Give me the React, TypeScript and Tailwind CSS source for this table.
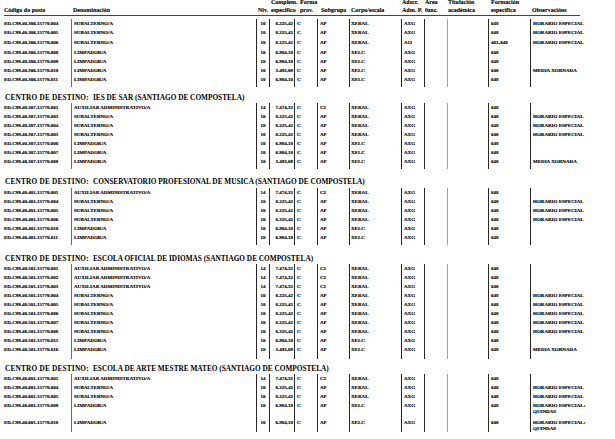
import React from "react";

type R = {
  code: string;
  den: string;
  niv: string;
  comp: string;
  sub: string;
  corpo: string;
  adscr: string;
  form: string;
  obs: string[];
  h?: string;
};

const AUX = { den: "AUXILIAR ADMINISTRATIVO/A", niv: "14", comp: "7.474,32", sub: "C2", corpo: "XERAL", adscr: "AXG", form: "648", obs: [] as string[] };
const SUB = { den: "SUBALTERNO/A", niv: "10", comp: "8.225,42", sub: "AP", corpo: "XERAL", adscr: "AXG", form: "648", obs: ["HORARIO ESPECIAL"] };
const LIM = { den: "LIMPADOR/A", niv: "10", comp: "6.984,18", sub: "AP", corpo: "XELC", adscr: "AXG", form: "648", obs: [] as string[] };
const LIMM = { den: "LIMPADOR/A", niv: "10", comp: "3.492,09", sub: "AP", corpo: "XELC", adscr: "AXG", form: "648", obs: ["MEDIA XORNADA"] };

const H9 = "h-[9px] leading-[9px]";

const sec1: R[] = [
  { code: "ED.C99.40.306.15770.004", ...SUB },
  { code: "ED.C99.40.306.15770.005", ...SUB },
  { code: "ED.C99.40.306.15770.006", ...SUB, adscr: "A11", form: "461-648", h: "h-[11px] leading-[11px]" },
  { code: "ED.C99.40.306.15770.008", ...LIM },
  { code: "ED.C99.40.306.15770.009", ...LIM },
  { code: "ED.C99.40.306.15770.010", ...LIMM },
  { code: "ED.C99.40.306.15770.011", ...LIM },
];

const sec2: R[] = [
  { code: "ED.C99.40.307.15770.001", ...AUX },
  { code: "ED.C99.40.307.15770.003", ...SUB },
  { code: "ED.C99.40.307.15770.004", ...SUB },
  { code: "ED.C99.40.307.15770.005", ...SUB },
  { code: "ED.C99.40.307.15770.006", ...LIM },
  { code: "ED.C99.40.307.15770.007", ...LIM },
  { code: "ED.C99.40.307.15770.008", ...LIMM },
];

const sec3: R[] = [
  { code: "ED.C99.40.401.15770.001", ...AUX },
  { code: "ED.C99.40.401.15770.004", ...SUB },
  { code: "ED.C99.40.401.15770.005", ...SUB },
  { code: "ED.C99.40.401.15770.006", ...SUB },
  { code: "ED.C99.40.401.15770.010", ...LIM },
  { code: "ED.C99.40.401.15770.011", ...LIM },
];

const sec4: R[] = [
  { code: "ED.C99.40.501.15770.001", ...AUX },
  { code: "ED.C99.40.501.15770.002", ...AUX },
  { code: "ED.C99.40.501.15770.003", ...AUX },
  { code: "ED.C99.40.501.15770.004", ...SUB },
  { code: "ED.C99.40.501.15770.005", ...SUB },
  { code: "ED.C99.40.501.15770.006", ...SUB },
  { code: "ED.C99.40.501.15770.007", ...SUB },
  { code: "ED.C99.40.501.15770.008", ...SUB },
  { code: "ED.C99.40.501.15770.015", ...LIM },
  { code: "ED.C99.40.501.15770.016", ...LIMM },
];

const sec5: R[] = [
  { code: "ED.C99.40.601.15770.001", ...AUX },
  { code: "ED.C99.40.601.15770.004", ...SUB },
  { code: "ED.C99.40.601.15770.005", ...SUB },
  { code: "ED.C99.40.601.15770.009", ...LIM, obs: ["HORARIO ESPECIAL:", "QUINDAS"], h: "h-[17px] leading-[9px]" },
  { code: "ED.C99.40.601.15770.010", ...LIM, obs: ["HORARIO ESPECIAL:", "QUINDAS"], h: "h-[14px] leading-[9px]" },
];

const B = "shrink-0 border-l border-[#262626]";

function Row({ r }: { r: R }) {
  const h = r.h ?? H9;
  return (
    <div className={`flex ${h} whitespace-nowrap text-[5px] font-bold [-webkit-text-stroke:0.15px_#000]`}>
      <div className="w-[67px] shrink-0">{r.code}</div>
      <div className="w-[185px] shrink-0 border-l border-[#6a6a6a] pl-[2px]">{r.den}</div>
      <div className={`w-[13px] text-center ${B}`}>{r.niv}</div>
      <div className={`w-[25px] pr-[1px] text-right ${B}`}>{r.comp}</div>
      <div className={`w-[23px] pl-[2px] ${B}`}>C</div>
      <div className={`w-[32px] pl-[2px] ${B}`}>{r.sub}</div>
      <div className={`w-[52px] pl-[1px] ${B}`}>{r.corpo}</div>
      <div className={`w-[23px] pl-[2px] ${B}`}>{r.adscr}</div>
      <div className={`w-[23px] ${B}`}></div>
      <div className="w-[41px] shrink-0 border-l border-[#a0a0a0]"></div>
      <div className={`w-[42px] pl-[2px] ${B}`}>{r.form}</div>
      <div className={`w-[85px] pl-[2px] ${B}`}>
        {r.obs.length > 1 ? (
          <div className="pt-[2px] leading-[6px]">
            {r.obs.map((o) => (
              <div key={o}>{o}</div>
            ))}
          </div>
        ) : (
          r.obs[0] ?? ""
        )}
      </div>
    </div>
  );
}

function Tail({ h }: { h: string }) {
  return (
    <div className={`flex ${h}`}>
      <div className="w-[67px] shrink-0"></div>
      <div className="w-[185px] shrink-0 border-l border-[#6a6a6a]"></div>
      <div className={`w-[13px] ${B}`}></div>
      <div className={`w-[25px] ${B}`}></div>
      <div className={`w-[23px] ${B}`}></div>
      <div className={`w-[32px] ${B}`}></div>
      <div className={`w-[52px] ${B}`}></div>
      <div className={`w-[23px] ${B}`}></div>
      <div className={`w-[23px] ${B}`}></div>
      <div className="w-[41px] shrink-0 border-l border-[#a0a0a0]"></div>
      <div className={`w-[42px] ${B}`}></div>
      <div className={`w-[85px] ${B}`}></div>
    </div>
  );
}

function Heading({ label }: { label: string }) {
  return (
    <div className="h-[10px] pl-[1px] whitespace-nowrap text-[7.3px] font-bold leading-[10px]">
      <span className="inline-block w-[88px] tracking-[0.2px]">CENTRO DE DESTINO:</span>
      <span>{label}</span>
    </div>
  );
}

function Header() {
  return (
    <div className="flex h-[16px] w-[576px] items-end whitespace-nowrap border-b border-[#444] pb-[1px] text-[6px] font-bold leading-[8px] [-webkit-text-stroke:0.1px_#000]">
      <div className="w-[67px] shrink-0">Código do posto</div>
      <div className="w-[185px] shrink-0 pl-[2px]">Denominación</div>
      <div className="w-[13px] shrink-0 pl-[2px]">Niv.</div>
      <div className="w-[25px] shrink-0 pl-[2px]">
        <div>Complem.</div>
        <div>específico</div>
      </div>
      <div className="w-[23px] shrink-0 pl-[6px]">
        <div>Forma</div>
        <div>prov.</div>
      </div>
      <div className="w-[32px] shrink-0 pl-[4px]">Subgrupo</div>
      <div className="w-[52px] shrink-0 pl-[2px]">Corpo/escala</div>
      <div className="w-[23px] shrink-0 pl-[1px]">
        <div>Adscr.</div>
        <div>Adm. P.</div>
      </div>
      <div className="w-[23px] shrink-0 pl-[1px]">
        <div>Área</div>
        <div>func.</div>
      </div>
      <div className="w-[41px] shrink-0 pl-[1px]">
        <div>Titulación</div>
        <div>académica</div>
      </div>
      <div className="w-[42px] shrink-0 pl-[3px]">
        <div>Formación</div>
        <div>específica</div>
      </div>
      <div className="w-[46px] shrink-0 pl-[2px]">Observacións</div>
    </div>
  );
}

export default function App() {
  return (
    <div className="h-[439px] w-[615px] overflow-hidden bg-white pl-[4px] font-['Liberation_Serif',serif] text-black">
      <Header />
      <div className="mt-[3px]">
        {sec1.map((r) => (
          <Row key={r.code} r={r} />
        ))}
        <Tail h="h-[3px]" />
      </div>
      <div className="mt-[6px]">
        <Heading label="IES DE SAR (SANTIAGO DE COMPOSTELA)" />
        {sec2.map((r) => (
          <Row key={r.code} r={r} />
        ))}
        <Tail h="h-[3px]" />
      </div>
      <div className="mt-[8px]">
        <Heading label="CONSERVATORIO PROFESIONAL DE MUSICA (SANTIAGO DE COMPOSTELA)" />
        <div className="h-[1px]"></div>
        {sec3.map((r) => (
          <Row key={r.code} r={r} />
        ))}
        <Tail h="h-[3px]" />
      </div>
      <div className="mt-[9px]">
        <Heading label="ESCOLA OFICIAL DE IDIOMAS (SANTIAGO DE COMPOSTELA)" />
        {sec4.map((r) => (
          <Row key={r.code} r={r} />
        ))}
        <Tail h="h-[5px]" />
      </div>
      <div className="mt-[5px]">
        <Heading label="ESCOLA DE ARTE MESTRE MATEO (SANTIAGO DE COMPOSTELA)" />
        {sec5.map((r) => (
          <Row key={r.code} r={r} />
        ))}
      </div>
    </div>
  );
}
